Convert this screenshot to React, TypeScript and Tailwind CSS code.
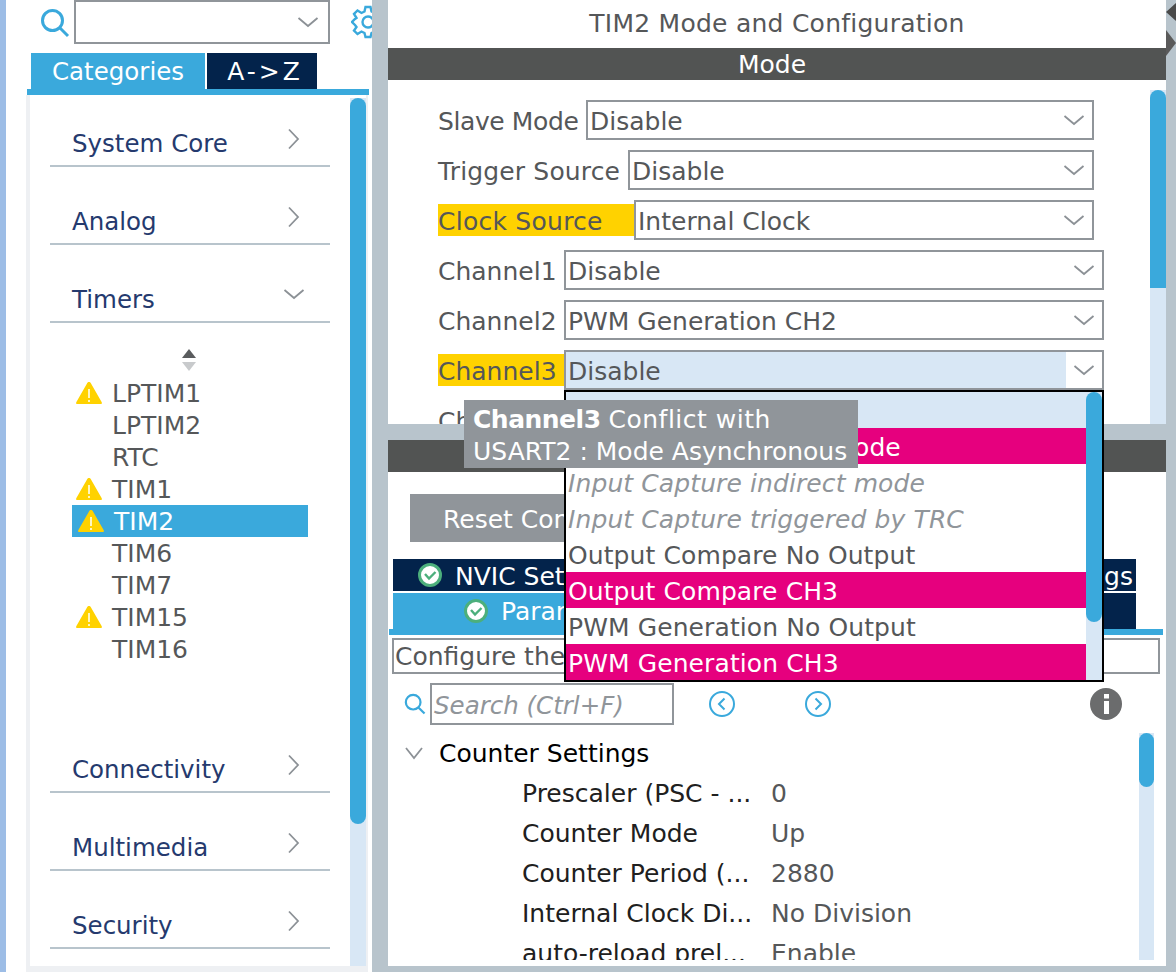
import React from "react";

const Chevron = ({ dir = "down", className = "" }: { dir?: "down" | "right"; className?: string }) => (
  <svg width="22" height="22" viewBox="0 0 22 22" className={className} fill="none" stroke="#8c9196" strokeWidth="1.8">
    {dir === "down" ? <path d="M1.5 7 L11 15 L20.5 7" /> : <path d="M6 1.5 L15 11 L6 20.5" />}
  </svg>
);

const Warn = () => (
  <svg width="28" height="24" viewBox="0 0 28 24">
    <path d="M14 1 C15 1 15.6 1.6 16 2.4 L26.6 21 C27.4 22.4 26.8 23 25.4 23 L2.6 23 C1.2 23 0.6 22.4 1.4 21 L12 2.4 C12.4 1.6 13 1 14 1Z" fill="#ffd200" />
    <rect x="13" y="8" width="2" height="9" fill="#fff6c0" />
    <rect x="13" y="19" width="2" height="2" fill="#fff6c0" />
  </svg>
);

const Check = () => (
  <svg width="26" height="26" viewBox="0 0 26 26">
    <circle cx="13" cy="13" r="10.5" fill="#fff" stroke="#4caf7c" strokeWidth="3" />
    <path d="M8 12 L12 16.5 L18.5 10" fill="none" stroke="#4caf7c" strokeWidth="2.4" />
  </svg>
);

const Loupe = ({ size = 30 }: { size?: number }) => (
  <svg width={size} height={size} viewBox="0 0 30 30" fill="none" stroke="#3aa9dc" strokeWidth="3">
    <circle cx="12.5" cy="12.5" r="10" />
    <path d="M20 20 L28 28" />
  </svg>
);

const Gear = () => (
  <svg width="34" height="34" viewBox="0 0 34 34" fill="none" stroke="#3aa9dc" strokeWidth="2.4">
    <circle cx="17" cy="17" r="5.5" />
    <path d="M14.5 2 H19.5 L20.5 6.5 L23.5 8 L27.5 5.5 L31 9 L28.5 13 L30 16 L33 17 L30 20 L28.5 22 L31 25.5 L27.5 29 L23.5 26.5 L20.5 28 L19.5 32 H14.5 L13.5 28 L10.5 26.5 L6.5 29 L3 25.5 L5.5 22 L4 20 L1 17 L4 14 L5.5 13 L3 9 L6.5 5.5 L10.5 8 L13.5 6.5Z" />
  </svg>
);

const Round = ({ dir }: { dir: "l" | "r" }) => (
  <svg width="28" height="28" viewBox="0 0 28 28" fill="none" stroke="#3aa9dc" strokeWidth="2">
    <circle cx="14" cy="14" r="12" />
    <path d={dir === "l" ? "M16.5 8.5 L11 14 L16.5 19.5" : "M11.5 8.5 L17 14 L11.5 19.5"} />
  </svg>
);

const Section = ({ title, open, h = 78 }: { title: string; open?: boolean; h?: number }) => (
  <div className="relative ml-[20px] w-[280px] flex items-end border-b-2 border-[#b8c4cc] pb-[6px] pl-[22px] text-[#253a6e] text-[24.5px] leading-[30px]" style={{ height: h }}>
    {title}
    <span className={open ? "absolute right-[25px] bottom-[16px]" : "absolute right-[25px] bottom-[15px]"}>
      <Chevron dir={open ? "down" : "right"} />
    </span>
  </div>
);

const items: [string, boolean, boolean?][] = [
  ["LPTIM1", true],
  ["LPTIM2", false],
  ["RTC", false],
  ["TIM1", true],
  ["TIM2", true, true],
  ["TIM6", false],
  ["TIM7", false],
  ["TIM15", true],
  ["TIM16", false],
];

const Sidebar = () => (
  <div className="w-[366px] h-full bg-white flex flex-col overflow-hidden">
    <div className="flex h-[44px] shrink-0">
      <div className="ml-[34px] mt-[8px] w-[34px] shrink-0"><Loupe /></div>
      <div className="w-[256px] h-[44px] shrink-0 border-2 border-[#90959a] flex items-center justify-end pr-[9px] box-border">
        <Chevron />
      </div>
      <div className="ml-[21px] mt-[5px] shrink-0"><Gear /></div>
    </div>
    <div className="flex mt-[9px] ml-[25px] h-[36px] shrink-0 gap-[2px] text-white text-[24.5px] leading-[38px]">
      <div className="w-[174px] bg-[#3aa9dc] text-center">Categories</div>
      <div className="w-[110px] bg-[#03234b] text-center tracking-[3px] text-[25px] pl-[6px]">A-&gt;Z</div>
    </div>
    <div className="ml-[21px] w-[342px] h-[6px] bg-[#3aa9dc] shrink-0" />
    <div className="ml-[20px] w-[342px] flex-1 min-h-0 bg-white border-l-4 border-r-2 border-b-[6px] border-[#eef0f3] flex box-border">
      <div className="flex-1 min-w-0">
        <Section title="System Core" h={72} />
        <Section title="Analog" />
        <Section title="Timers" open />
        <div className="flex justify-center h-[54px] pt-[26px] pr-[3px] box-border">
          <svg width="16" height="22" viewBox="0 0 16 22">
            <path d="M8 0 L15 9 H1Z" fill="#5a5c5e" />
            <path d="M8 22 L15 13 H1Z" fill="#c8cacc" />
          </svg>
        </div>
        <div className="ml-[42px] w-[236px]">
          {items.map(([name, warn, sel]) => (
            <div key={name} className={"h-[32px] flex items-center text-[25px] leading-[32px] " + (sel ? "bg-[#3aa9dc] text-white" : "text-[#555759]")}>
              <span className={sel ? "w-[42px] pl-[5px] flex" : "w-[40px] pl-[3px] flex"}>{warn && <Warn />}</span>
              <span className="mt-[2px]">{name}</span>
            </div>
          ))}
        </div>
        <Section title="Connectivity" h={128} />
        <Section title="Multimedia" />
        <Section title="Security" />
      </div>
      <div className="w-[16px] bg-[#d8e7f5] mt-[3px] relative">
        <div className="h-[726px] bg-[#3aa9dc] rounded-[8px]" />
      </div>
    </div>
  </div>
);

const rows: { label: string; lw: number; sw: number; val: string; warn?: boolean; sel?: boolean; tr?: string }[] = [
  { label: "Slave Mode", lw: 148, sw: 508, val: "Disable", tr: "tracking-[-0.4px]" },
  { label: "Trigger Source", lw: 190, sw: 466, val: "Disable", tr: "tracking-[0.15px]" },
  { label: "Clock Source", lw: 196, sw: 460, val: "Internal Clock", warn: true, tr: "tracking-[0.25px]" },
  { label: "Channel1", lw: 126, sw: 540, val: "Disable" },
  { label: "Channel2", lw: 126, sw: 540, val: "PWM Generation CH2" },
  { label: "Channel3", lw: 126, sw: 540, val: "Disable", warn: true, sel: true },
  { label: "Channel4", lw: 126, sw: 540, val: "Disable" },
];

const menu: [string, string][] = [
  ["Disable", "bg-[#d8e7f5] text-[#555759]"],
  ["Input Capture direct mode", "bg-[#e6007e] text-white"],
  ["Input Capture indirect mode", "italic text-[#90959a]"],
  ["Input Capture triggered by TRC", "italic text-[#90959a]"],
  ["Output Compare No Output", "text-[#555759]"],
  ["Output Compare CH3", "bg-[#e6007e] text-white"],
  ["PWM Generation No Output", "text-[#555759]"],
  ["PWM Generation CH3", "bg-[#e6007e] text-white"],
];

const tree: [string, string][] = [
  ["Prescaler (PSC - ...", "0"],
  ["Counter Mode", "Up"],
  ["Counter Period (...", "2880"],
  ["Internal Clock Di...", "No Division"],
  ["auto-reload prel...", "Enable"],
];

const TopPanel = () => (
  <div className="h-[424px] shrink-0 bg-white overflow-hidden flex flex-col">
    <div className="h-[48px] shrink-0 flex items-center justify-center text-[25px] tracking-[0.25px] text-[#555759]">TIM2 Mode and Configuration</div>
    <div className="h-[32px] shrink-0 bg-[#525453] text-white text-[25px] leading-[34px] text-center pr-[10px]">Mode</div>
    <div className="flex flex-1 min-h-0">
      <div className="flex-1 pt-[15px] pl-[50px]">
        {rows.map((r) => (
          <div key={r.label} className="h-[50px] flex items-center text-[25px] text-[#555759]">
            <div className={"h-[32px] leading-[35px] " + (r.warn ? "bg-[#ffd200] " : "") + (r.tr ?? "")} style={{ width: r.lw }}>{r.label}</div>
            <div className="h-[40px] border-2 border-[#90959a] box-border flex items-center bg-white" style={{ width: r.sw }}>
              <div className={"flex-1 h-full leading-[39px] pl-[2px] " + (r.sel ? "bg-[#d8e7f5]" : "")}>{r.val}</div>
              <div className="w-[36px] flex justify-center"><Chevron /></div>
            </div>
          </div>
        ))}
      </div>
      <div className="w-[16px] mt-[10px] bg-[#d8e7f5]">
        <div className="h-[198px] bg-[#3aa9dc] rounded-t-[8px]" />
      </div>
    </div>
  </div>
);

const BottomPanel = () => (
  <div className="flex-1 min-h-0 bg-white flex flex-col mb-[6px] overflow-hidden">
    <div className="h-[32px] shrink-0 bg-[#525453] text-white text-[25px] leading-[32px] text-center">Configuration</div>
    <div className="mt-[22px] ml-[22px] w-[400px] h-[48px] shrink-0 bg-[#90959a] text-white text-[25px] leading-[51px] pl-[33px]">Reset Configuration</div>
    <div className="mt-[17px] ml-[5px] w-[743px] h-[32px] shrink-0 bg-[#03234b] flex text-white text-[25px] leading-[32px]">
      <div className="w-[248px] flex items-center pl-[24px] gap-[12px]"><Check /><span className="mt-[4px]">NVIC Settings</span></div>
      <div className="w-[248px] flex items-center justify-center gap-[12px]"><Check /><span className="mt-[4px]">DMA Settings</span></div>
      <div className="flex-1 flex items-center justify-end pr-[3px]"><span className="mt-[4px]">GPIO Settings</span></div>
    </div>
    <div className="mt-[2px] ml-[5px] w-[743px] h-[36px] shrink-0 bg-[#03234b] flex text-white text-[25px] leading-[37px]">
      <div className="w-[372px] bg-[#3aa9dc] flex items-center pl-[70px] gap-[12px]"><Check />Parameter Settings</div>
      <div className="flex-1 text-center">User Constants</div>
    </div>
    <div className="ml-[1px] w-[774px] h-[6px] shrink-0 bg-[#3aa9dc]" />
    <div className="mt-[3px] ml-[4px] w-[768px] h-[36px] shrink-0 border-2 border-[#90959a] box-border text-[25px] leading-[33px] text-[#555759] pl-[1px]">Configure the below parameters :</div>
    <div className="mt-[9px] h-[42px] shrink-0 flex items-center pl-[16px]">
      <Loupe size={22} />
      <div className="ml-[4px] w-[244px] h-[42px] border-2 border-[#90959a] box-border italic text-[#90959a] text-[24.5px] leading-[42px] pl-[2px]">Search (Ctrl+F)</div>
      <span className="ml-[34px] flex"><Round dir="l" /></span>
      <span className="ml-[68px] flex"><Round dir="r" /></span>
      <svg width="32" height="32" viewBox="0 0 32 32" className="ml-[258px]">
        <circle cx="16" cy="16" r="16" fill="#6b6c6d" />
        <rect x="14" y="13" width="5" height="13" fill="#fff" />
        <rect x="14" y="6" width="5" height="4.5" fill="#fff" />
      </svg>
    </div>
    <div className="flex flex-1 min-h-0 mt-[8px] pb-[6px] text-[25px] leading-[41px]">
      <div className="flex-1 overflow-hidden">
        <div className="h-[40px] flex items-center text-black pl-[17px]">
          <span className="w-[34px] flex"><svg width="18" height="18" viewBox="0 0 18 18" fill="none" stroke="#8c9196" strokeWidth="1.8"><path d="M1 4 L9 14 L17 4" /></svg></span>
          Counter Settings
        </div>
        {tree.map(([k, v]) => (
          <div key={k} className="h-[40px] flex pl-[134px]">
            <div className="w-[249px] text-[#202020] whitespace-nowrap">{k}</div>
            <div className="text-[#555759]">{v}</div>
          </div>
        ))}
      </div>
      <div className="w-[15px] mr-[12px] bg-[#d8e7f5]">
        <div className="h-[54px] bg-[#3aa9dc] rounded-[8px]" />
      </div>
    </div>
  </div>
);

export default function App() {
  return (
    <div className="relative w-[1176px] h-[972px] overflow-hidden flex bg-[#b8c4cc] font-['DejaVu_Sans',sans-serif]">
      <div className="w-[6px] bg-[#9dbde6] shrink-0" />
      <Sidebar />
      <div className="relative ml-[16px] w-[778px] h-full flex flex-col gap-[16px] shrink-0">
        <TopPanel />
        <BottomPanel />
        <div className="absolute left-[176px] top-[390px] w-[540px] h-[292px] bg-white border-2 border-black box-border flex text-[25px] leading-[39px]">
          <div className="flex-1 min-w-0">
            {menu.map(([t, c]) => (
              <div key={t} className={"h-[36px] pl-[2px] whitespace-nowrap tracking-[0.1px] " + c}>{t}</div>
            ))}
          </div>
          <div className="w-[16px] bg-[#d8e7f5]">
            <div className="h-[230px] bg-[#3aa9dc] rounded-[8px]" />
          </div>
        </div>
        <div className="absolute left-[76px] top-[400px] w-[394px] h-[68px] bg-[#90959a] text-white text-[25px] leading-[32px] pl-[9px] pt-[4px] whitespace-nowrap">
          <b className="tracking-[-0.5px]">Channel3</b> <span className="tracking-[0.5px]">Conflict with</span><br />USART2 : Mode Asynchronous
        </div>
      </div>
      <div className="w-[10px] shrink-0 relative overflow-hidden">
        <svg width="10" height="60" viewBox="0 0 10 60">
          <path d="M0 12 L10 3 V21Z" fill="#4a4a4a" />
          <path d="M0 30 L10 43 L0 56Z" fill="#5a5a5a" />
        </svg>
      </div>
    </div>
  );
}
